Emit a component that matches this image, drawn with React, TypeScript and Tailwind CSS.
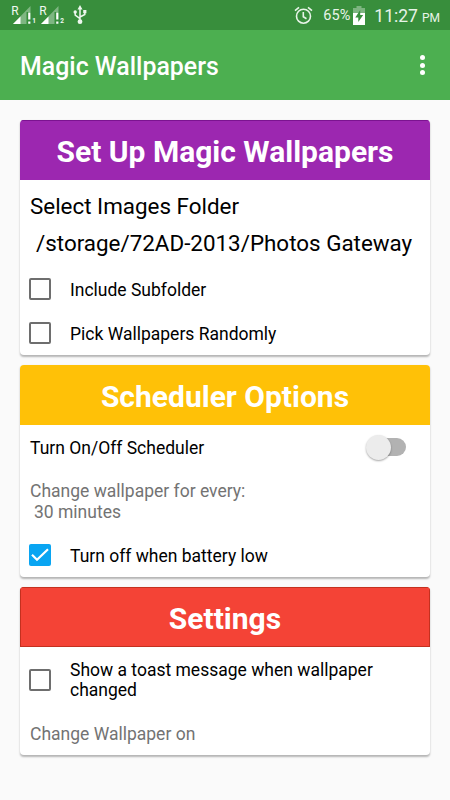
import type { ReactNode } from "react";

function SignalIcon({ sim }: { sim: string }) {
  return (
    <svg width="27" height="22" viewBox="0 0 27 22">
      <path d="M20.5 2v18H3z" fill="#fff" fillOpacity="0.36" />
      <path d="M10.5 12.5V20H3z" fill="#fff" />
      <path d="M16.5 8h5v12.5h-5z" fill="#388e3c" />
      <path d="M18.2 8.5h2.2v7h-2.2zM18.2 17.5h2.2v2.2h-2.2z" fill="#fff" />
      <text x="1.3" y="10.5" fontSize="12" fill="#f1f8f1">
        R
      </text>
      <text x="22.3" y="19.4" fontSize="6.5" fontWeight="700" fill="#f1f8f1">
        {sim}
      </text>
    </svg>
  );
}

function UsbIcon() {
  return (
    <svg width="14" height="20" viewBox="0 0 14 20" fill="none" stroke="#eef7ee">
      <path
        d="M7 4v12M2.2 7.5v2.7L7 13.7M11.8 7v2.5L7 12"
        strokeWidth="1.5"
      />
      <path d="M7 0 4.5 4.5h5zM10.2 5h3.2v3.2h-3.2z" fill="#eef7ee" stroke="none" />
      <circle cx="2.2" cy="7" r="1.7" fill="#eef7ee" stroke="none" />
      <circle cx="7" cy="16.7" r="2.4" fill="#eef7ee" stroke="none" />
    </svg>
  );
}

function AlarmIcon() {
  return (
    <svg
      width="19"
      height="19"
      viewBox="0 0 19 19"
      fill="none"
      stroke="#e8f4e8"
      strokeWidth="1.6"
    >
      <circle cx="9.5" cy="10.2" r="7" />
      <path d="M9.3 6v4.7l3.2 2M1 4.6l4-3.3M18 4.6l-4-3.3" />
    </svg>
  );
}

function BatteryIcon() {
  return (
    <svg width="12" height="19" viewBox="0 0 12 19">
      <path d="M3.5 0h5v2H12v5H0V2h3.5z" fill="#fff" fillOpacity="0.35" />
      <path d="M0 7h12v12H0z" fill="#fff" />
      <path d="M7.2 4 2.3 11.5h3V16l4.9-7H7.2z" fill="#388e3c" />
    </svg>
  );
}

function Checkbox({ checked = false }: { checked?: boolean }) {
  if (checked) {
    return (
      <span className="flex size-[22px] shrink-0 items-center justify-center rounded-[2px] bg-[#09a5f2]">
        <svg width="18" height="14" viewBox="0 0 18 14" fill="none">
          <path d="m1 6.8 5 5L17 1.2" stroke="#fff" strokeWidth="2.2" />
        </svg>
      </span>
    );
  }
  return (
    <span className="size-[22px] shrink-0 rounded-[2px] border-2 border-[#6e6e6e]" />
  );
}

function Card({
  title,
  headerClass,
  children,
}: {
  title: string;
  headerClass: string;
  children: ReactNode;
}) {
  return (
    <section className="overflow-hidden rounded-[4px] bg-white shadow-[0_1.5px_2px_rgba(0,0,0,0.28)]">
      <h2
        className={`flex h-[60px] items-center justify-center text-[30px] font-bold text-white ${headerClass}`}
      >
        {title}
      </h2>
      {children}
    </section>
  );
}

export default function App() {
  return (
    <div className="h-[800px] w-[450px] overflow-hidden bg-[#fafafa] font-[Roboto,sans-serif] text-[17.5px] text-black">
      <div className="flex h-[30px] items-center bg-[#388e3c] px-[10px] text-[#e8f4e8]">
        <SignalIcon sim="1" />
        <span className="ml-px flex">
          <SignalIcon sim="2" />
        </span>
        <span className="ml-2">
          <UsbIcon />
        </span>
        <div className="ml-auto flex items-center">
          <AlarmIcon />
          <span className="ml-[10px] w-[28px] pt-[2px] text-[14.5px] whitespace-nowrap">
            65%
          </span>
          <span className="ml-[2px]">
            <BatteryIcon />
          </span>
          <span className="ml-[9px] flex items-baseline pt-[3px] leading-none">
            <span className="text-[17.5px]">11:27</span>
            <span className="ml-1 text-[12px]">PM</span>
          </span>
        </div>
      </div>

      <header className="flex h-[70px] items-center justify-between bg-[#4caf50] pr-[25px] pl-5">
        <h1 className="pt-[3px] text-[24.9px] font-medium text-white">Magic Wallpapers</h1>
        <div className="flex flex-col gap-[2.5px]">
          <span className="size-[5px] rounded-full bg-white" />
          <span className="size-[5px] rounded-full bg-white" />
          <span className="size-[5px] rounded-full bg-white" />
        </div>
      </header>

      <main className="flex flex-col gap-[10px] px-5 pt-5">
        <Card
          title="Set Up Magic Wallpapers"
          headerClass="border-t border-[#7b1390] bg-[#9c27b0] pt-[2px]"
        >
          <div className="pt-[9px] text-[22.4px]">
            <p className="flex h-9 items-center px-[10px]">Select Images Folder</p>
            <p className="flex h-[37px] items-center px-4 whitespace-nowrap">
              /storage/72AD-2013/Photos Gateway
            </p>
          </div>
          <div className="mt-[5px] flex h-11 items-center gap-[19px] pl-[9px]">
            <Checkbox />
            <span className="pt-[2px]">Include Subfolder</span>
          </div>
          <div className="flex h-11 items-center gap-[19px] pl-[9px]">
            <Checkbox />
            <span className="pt-[2px]">Pick Wallpapers Randomly</span>
          </div>
        </Card>

        <Card title="Scheduler Options" headerClass="bg-[#ffc107] pt-[2px]">
          <div className="flex h-11 items-center justify-between pr-6 pl-[10px]">
            <span className="pt-[2px]">Turn On/Off Scheduler</span>
            <span className="flex h-[18px] w-[38px] items-center rounded-full bg-[#b2b2b2]">
              <span className="-ml-[2px] size-[25px] rounded-full bg-[#ececec] shadow-[0_1px_2px_rgba(0,0,0,0.35)]" />
            </span>
          </div>
          <div className="mt-3 px-[10px] leading-[20.5px] text-[#737373]">
            <p>Change wallpaper for every:</p>
            <p className="pl-1">30 minutes</p>
          </div>
          <div className="mt-[11px] flex h-11 items-center gap-[19px] pl-[9px]">
            <Checkbox checked />
            <span className="pt-[2px]">Turn off when battery low</span>
          </div>
        </Card>

        <Card
          title="Settings"
          headerClass="border border-[#c4301f] bg-[#f44336] pt-[2px]"
        >
          <div className="flex h-[66px] items-center gap-[19px] pl-[9px]">
            <Checkbox />
            <span className="w-[320px] leading-[20.5px]">
              Show a toast message when wallpaper changed
            </span>
          </div>
          <p className="flex h-[42px] items-center px-[10px] text-[#737373]">
            Change Wallpaper on
          </p>
        </Card>
      </main>
    </div>
  );
}
